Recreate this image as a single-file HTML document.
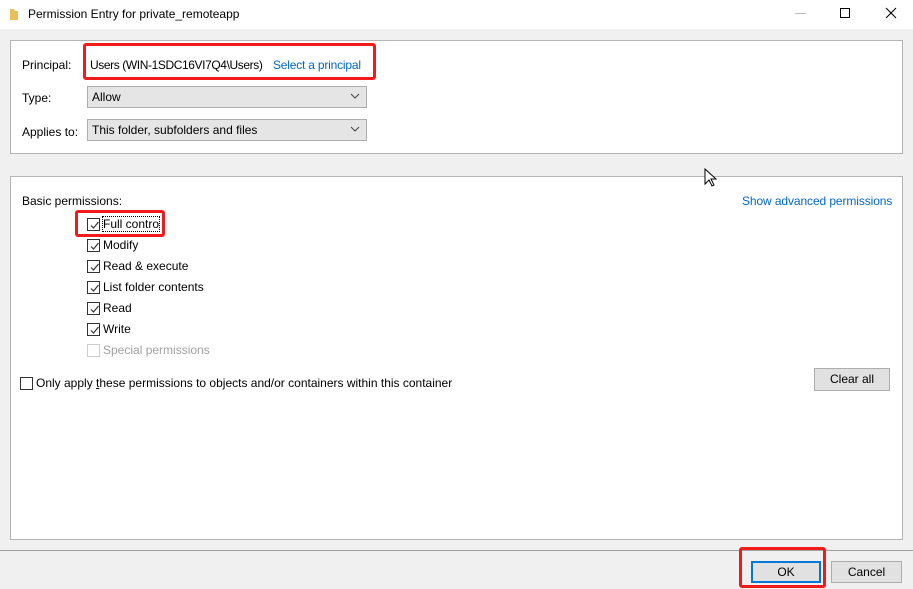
<!DOCTYPE html>
<html><head><style>
*{margin:0;padding:0;box-sizing:border-box}
body{width:913px;height:589px;background:#f0f0f0;font-family:"Liberation Sans",sans-serif;font-size:12px;color:#000;position:relative;overflow:hidden}
.a{position:absolute;white-space:nowrap}
.panel{position:absolute;background:#fff;border:1px solid #b4b4b4}
.sel{position:absolute;background:#e5e5e5;border:1px solid #adadad;height:22px;padding:3px 4px}
.chev{position:absolute;right:6px;top:4px}
.cb{position:absolute;width:13px;height:13px;border:1px solid #333;background:#fff}
.cb svg{position:absolute;left:1px;top:1px}
.red{position:absolute;border:3px solid #f01c1c;border-radius:3px}
.link{color:#0066cc}
.btn{position:absolute;background:#e1e1e1;border:1px solid #adadad;text-align:center;line-height:20px}
</style></head><body>
<div class="a" style="left:0;top:0;width:913px;height:29px;background:#fff"></div>
<svg class="a" style="left:9px;top:8px" width="10" height="13"><path d="M1 1h4l1 2h3v9H1z" fill="#e8c05a"/></svg>
<div class="a" style="left:28px;top:7px">Permission Entry for private_remoteapp</div>
<div class="a" style="left:795px;top:13px;width:11px;height:1px;background:#bbb"></div>
<div class="a" style="left:840px;top:8px;width:10px;height:10px;border:1px solid #000"></div>
<svg class="a" style="left:885px;top:7px" width="12" height="12"><path d="M1 1L11 11M11 1L1 11" stroke="#000" stroke-width="1.1"/></svg>

<div class="panel" style="left:10px;top:40px;width:893px;height:114px"></div>
<div class="a" style="left:22px;top:58px">Principal:</div>
<div class="a" style="left:90px;top:58px;letter-spacing:-0.4px">Users (WIN-1SDC16VI7Q4\Users)</div>
<div class="a link" style="left:273px;top:58px;letter-spacing:-0.2px">Select a principal</div>
<div class="red" style="left:83px;top:43px;width:293px;height:37px"></div>
<div class="a" style="left:22px;top:91px">Type:</div>
<div class="sel" style="left:87px;top:86px;width:280px">Allow<svg class="chev" width="10" height="10"><path d="M1 3l4 4 4-4" fill="none" stroke="#444"/></svg></div>
<div class="a" style="left:22px;top:125px">Applies to:</div>
<div class="sel" style="left:87px;top:119px;width:280px">This folder, subfolders and files<svg class="chev" width="10" height="10"><path d="M1 3l4 4 4-4" fill="none" stroke="#444"/></svg></div>

<div class="panel" style="left:10px;top:176px;width:893px;height:364px"></div>
<svg class="a" style="left:704px;top:168px" width="14" height="20"><path d="M1 1v15l4-4 3 6 2-1-3-6h5z" fill="#fff" stroke="#000"/></svg>
<div class="a" style="left:22px;top:194px">Basic permissions:</div>
<div class="a link" style="left:742px;top:194px;letter-spacing:-0.1px">Show advanced permissions</div>

<div class="cb" style="left:87px;top:218px"><svg width="11" height="11"><path d="M2 5.5l2.5 2.5 5-6" fill="none" stroke="#333" stroke-width="1.2"/></svg></div>
<div class="a" style="left:103px;top:217px;outline:1px dotted #000">Full contro</div>
<div class="red" style="left:75px;top:210px;width:90px;height:27px"></div>
<div class="cb" style="left:87px;top:239px"><svg width="11" height="11"><path d="M2 5.5l2.5 2.5 5-6" fill="none" stroke="#333" stroke-width="1.2"/></svg></div>
<div class="a" style="left:103px;top:238px">Modify</div>
<div class="cb" style="left:87px;top:260px"><svg width="11" height="11"><path d="M2 5.5l2.5 2.5 5-6" fill="none" stroke="#333" stroke-width="1.2"/></svg></div>
<div class="a" style="left:103px;top:259px">Read &amp; execute</div>
<div class="cb" style="left:87px;top:281px"><svg width="11" height="11"><path d="M2 5.5l2.5 2.5 5-6" fill="none" stroke="#333" stroke-width="1.2"/></svg></div>
<div class="a" style="left:103px;top:280px">List folder contents</div>
<div class="cb" style="left:87px;top:302px"><svg width="11" height="11"><path d="M2 5.5l2.5 2.5 5-6" fill="none" stroke="#333" stroke-width="1.2"/></svg></div>
<div class="a" style="left:103px;top:301px">Read</div>
<div class="cb" style="left:87px;top:323px"><svg width="11" height="11"><path d="M2 5.5l2.5 2.5 5-6" fill="none" stroke="#333" stroke-width="1.2"/></svg></div>
<div class="a" style="left:103px;top:322px">Write</div>
<div class="cb" style="left:87px;top:344px;border-color:#ccc"></div>
<div class="a" style="left:103px;top:343px;color:#a0a0a0">Special permissions</div>

<div class="cb" style="left:20px;top:377px"></div>
<div class="a" style="left:36px;top:376px">Only apply <u>t</u>hese permissions to objects and/or containers within this container</div>
<div class="btn" style="left:814px;top:368px;width:76px;height:23px">Clear all</div>

<div class="a" style="left:0;top:550px;width:913px;height:1px;background:#a0a0a0"></div>
<div class="btn" style="left:751px;top:561px;width:70px;height:22px;border:1px solid #0078d7;box-shadow:inset 0 0 0 1px #0078d7">OK</div>
<div class="red" style="left:739px;top:547px;width:87px;height:41px"></div>
<div class="btn" style="left:831px;top:561px;width:71px;height:22px">Cancel</div>
</body></html>
